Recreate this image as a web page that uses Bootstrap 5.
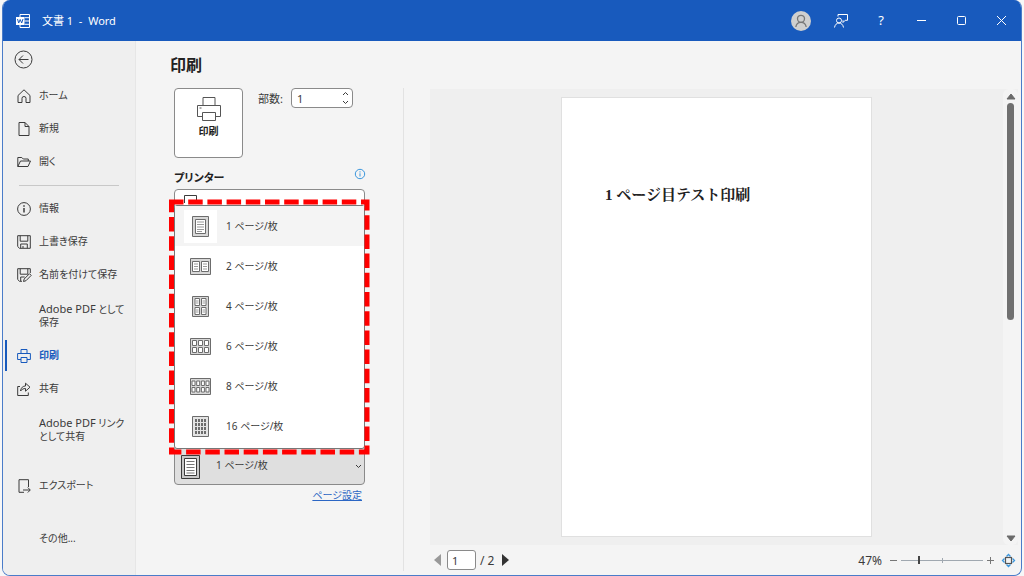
<!DOCTYPE html>
<html lang="ja">
<head>
<meta charset="utf-8">
<meta name="viewport" content="width=device-width, initial-scale=1">
<title>文書 1 - Word</title>
<link href="https://cdn.jsdelivr.net/npm/bootstrap@5.3.0/dist/css/bootstrap.min.css" rel="stylesheet">
<style>
:root { --word-blue: #185abd; --line: #8a8a8a; --ink: #3b3b3b; }
body { font-family: "Noto Sans", "Noto Sans CJK JP", sans-serif; font-size: 11px; line-height: 13px; color: var(--ink); font-feature-settings: "palt"; background: #f7f7f7; padding: 0 2px; }
svg { display: block; fill: none; stroke: currentColor; overflow: visible; }
button, input, select { font: inherit; color: inherit; font-feature-settings: inherit; }
.app-window { border: 1px solid #4a7cc9; border-top: 0; border-radius: 8px; background: #f4f4f4; overflow: hidden; }
.title-bar { background: var(--word-blue); color: #fff; height: 41px; padding-left: 13px; }
.title-bar button { width: 40px; height: 40px; color: #fff; font-size: 13px; }
.doc-name { white-space: pre; }
.bare { background: none; border: 0; padding: 0; }
.side { width: 133px; background: #efefef; border-right: 1px solid #e6e6e6; font-size: 10px; }
.side a { color: var(--ink); text-decoration: none; min-height: 33px; padding-left: 14px; gap: 8px; }
.side a.two-line { min-height: 48px; }
.side a svg, .side .blank { width: 14px; height: 14px; flex: none; }
.side .latin { font-size: 11px; }
.side .back { height: 36px; margin-bottom: 2px; padding-left: 11px; }
.side hr { margin: 7px 16px 6px 16px; border-top: 1px solid #c8c8c8; opacity: 1; }
.side a.current { color: var(--word-blue); font-weight: 700; position: relative; }
.side a.current::before { content: ""; position: absolute; left: 2px; top: 1px; bottom: 1px; width: 2px; background: var(--word-blue); }
.side .apart { margin-top: 20px; }
.pane-title { font-size: 16px; line-height: 20px; font-weight: 700; padding: 14px 0 13px 34px; margin: 0; color: #222; }
.settings { width: 268px; padding-left: 38px; padding-right: 38px; border-right: 1px solid #e2e2e2; }
.print-btn { width: 69px; height: 70px; border: 1px solid var(--line); border-radius: 4px; background: #fff; font-size: 10px; font-weight: 700; color: #222; padding-bottom: 12px; }
.print-btn svg { color: #555; }
.copies { width: 62px; height: 20px; border: 1px solid var(--line); border-radius: 4px; background: #fff; margin-right: 12px; }
.copies input { width: 40px; border: 0; background: none; padding: 0 0 0 5px; appearance: textfield; }
.copies input::-webkit-inner-spin-button { appearance: none; }
.copies button { width: 13px; height: 9px; }
.field-head { height: 31px; font-size: 11px; font-weight: 700; color: #222; }
.field-head svg { color: #3a96dd; }
.choices { height: 296px; font-size: 10px; }
.picker { position: relative; }
.picker select { width: 100%; height: 40px; border: 1px solid var(--line); border-radius: 4px; background: #fff; padding: 0 0 0 41px; appearance: none; }
.picker.pages select { background: #dfdfdf; }
.picker svg { position: absolute; pointer-events: none; }
.device-icon { left: 10px; top: 6px; }
.sheet-icon { left: 7px; top: 10px; }
.arrow-icon { right: 4px; top: 20px; }
.sheet-menu { position: absolute; top: 16px; left: 0; right: 0; border: 1px solid #777; border-radius: 3px; background: #fff; padding-bottom: 2px; }
.sheet-menu button { width: 100%; height: 40px; padding-left: 9px; gap: 9px; text-align: left; }
.sheet-menu button.selected { background: #f4f4f4; }
.sheet-menu .thumb { width: 33px; height: 33px; display: flex; align-items: center; justify-content: center; color: #6c6c6c; }
.sheet-menu .selected .thumb { background: #fff; }
.callout { position: absolute; left: -5px; top: 10px; width: 201px; height: 256px; color: #f00; pointer-events: none; }
.setup-link { color: #2b66c4; height: 21px; padding-right: 3px; font-size: 10px; }
.preview { padding-left: 26px; padding-right: 3px; }
.canvas-area { background: #efefef; margin-top: 1px; }
.paper { aspect-ratio: 311 / 440; background: #fff; border: 1px solid #e0e0e0; margin: 8px 0; padding: 88px 0 0 43px; font: 700 15px/18px "Liberation Serif", "Noto Serif CJK JP", "Noto Sans CJK JP", serif; color: #222; font-feature-settings: normal; }
.scroller { width: 15px; background: #f4f4f4; color: #6a6a6a; border-radius: 6px; padding: 5px 0 4px; }
.scroller .grip { width: 7px; height: 217px; background: #707070; border-radius: 4px; margin-top: 4px; }
.status { height: 30px; padding-left: 4px; padding-right: 3px; font-size: 12px; }
.status input[type=text] { width: 29px; height: 20px; border: 1px solid var(--line); border-radius: 3px; padding: 0 0 0 4px; margin: 0 4px 0 6px; background: #fff; font-size: 11px; }
.zoom { appearance: none; width: 82px; height: 10px; background: linear-gradient(#a0a8b0, #a0a8b0) center / 100% 1px no-repeat, linear-gradient(#a0a8b0, #a0a8b0) center / 1px 5px no-repeat; }
.zoom::-webkit-slider-thumb { appearance: none; width: 2px; height: 8px; background: #444; }
.scale-step { color: #777; }
</style>
<script src="https://cdn.jsdelivr.net/npm/bootstrap@5.3.0/dist/js/bootstrap.bundle.min.js"></script>
</head>
<body class="min-vh-100 d-flex flex-column">
<div class="app-window flex-grow-1 d-flex flex-column">
  <header class="title-bar d-flex align-items-center">
    <svg width="14" height="14" viewBox="0 0 14 14"><path d="M4 3V.5h9.500v13H4V11M8.500 3.700h5M8.500 7h5M8.500 10.300h5"/><rect x="0" y="3" width="8.500" height="8" fill="#fff" stroke="none"/><path d="M1.500 5l1.200 4L4.200 5.500 5.700 9 7 5" stroke="#185abd" stroke-width="1"/></svg>
    <span class="doc-name ms-2 ps-1 me-auto">文書 1  -  Word</span>
    <button class="bare d-flex align-items-center justify-content-center" aria-label="アカウント"><svg width="20" height="20" viewBox="0 0 20 20"><circle cx="10" cy="10" r="10" fill="#cfcfcf" stroke="none"/><g stroke="#777" stroke-width="1.300"><circle cx="10" cy="7.800" r="3.500"/><path d="M4.800 16c.5-3 2.500-4.700 5.200-4.700s4.700 1.700 5.200 4.700"/></g></svg></button>
    <button class="bare d-flex align-items-center justify-content-center" aria-label="フィードバック"><svg width="14" height="14" viewBox="0 0 14 14"><circle cx="5" cy="6.500" r="2.500"/><path d="M.5 13.500c.5-2.800 2.200-4.500 4.500-4.500s4 1.700 4.500 4.500M4 2.500V.5h9.500v5.800h-2.300L9 8.500V6.300"/></svg></button>
    <button class="bare" aria-label="ヘルプ">?</button>
    <button class="bare d-flex align-items-center justify-content-center" aria-label="最小化"><svg width="9" height="9" viewBox="0 0 9 9"><path d="M0 4.500h9"/></svg></button>
    <button class="bare d-flex align-items-center justify-content-center" aria-label="最大化"><svg width="9" height="9" viewBox="0 0 9 9"><rect x=".5" y=".5" width="8" height="8" rx="1"/></svg></button>
    <button class="bare d-flex align-items-center justify-content-center" aria-label="閉じる"><svg width="9" height="9" viewBox="0 0 9 9"><path d="M0 0l9 9M9 0L0 9"/></svg></button>
  </header>

  <div class="flex-grow-1 d-flex">
    <nav class="side flex-shrink-0 d-flex flex-column">
      <button class="bare back d-flex align-items-center" aria-label="戻る"><svg width="19" height="19" viewBox="0 0 19 19"><circle cx="9.500" cy="9.500" r="8.500"/><path d="M14.500 9.500H5M9 5.500l-4 4 4 4"/></svg></button>
      <a href="#" class="d-flex align-items-center"><svg viewBox="0 0 14 14"><path d="M1 6.500L7 .8l6 5.700v7H9V9.300Q9 7.500 7 7.500T5 9.300v4.200H1z"/></svg>ホーム</a>
      <a href="#" class="d-flex align-items-center"><svg viewBox="0 0 14 14"><path d="M2 .5h6l4 4v9H2zM8 .5v4h4"/></svg>新規</a>
      <a href="#" class="d-flex align-items-center"><svg viewBox="0 0 14 14"><path d="M.8 11.500v-9h4L6.300 4h5v2M.8 11.500L3.500 6h10L11 11.500z"/></svg>開く</a>
      <hr>
      <a href="#" class="d-flex align-items-center"><svg viewBox="0 0 14 14"><circle cx="7" cy="7" r="6.400"/><path d="M7 6v4.500M7 3.300v1.500" stroke-width="1.500"/></svg>情報</a>
      <a href="#" class="d-flex align-items-center"><svg viewBox="0 0 14 14"><path d="M.7.7h12.600v12.600H2.500L.7 11.500zM3.200.7v5.500h7.600V.7M3.700 13.300V9h6.600v4.300M6 11v2"/></svg>上書き保存</a>
      <a href="#" class="d-flex align-items-center"><svg viewBox="0 0 14 14"><path d="M13.300 5V.7H.7v10.800l1.800 1.800H5M3.200.7v5.500h7.600V.7M3.700 13V9h4M6.500 13.500l.7-2.500 5.300-5.300 1.700 1.700L9 12.700z"/></svg>名前を付けて保存</a>
      <a href="#" class="two-line d-flex align-items-center"><span class="blank"></span><span><span class="latin">Adobe PDF</span> として<br>保存</span></a>
      <a href="#" class="current d-flex align-items-center" aria-current="page"><svg viewBox="0 0 14 14"><path d="M4 4.500v-4h6v4M4 10.500H.6v-6h12.800v6H10M4 8.500h6v5H4z"/></svg>印刷</a>
      <a href="#" class="d-flex align-items-center"><svg viewBox="0 0 14 14"><path d="M3 4.500H.7v9h10.600v-3M3.500 9C4 5.500 6 4 8.500 4V1.200l4.500 4-4.500 4V6.500C6.500 6.500 5 7.200 3.500 9z"/></svg>共有</a>
      <a href="#" class="two-line d-flex align-items-center"><span class="blank"></span><span><span class="latin">Adobe PDF</span> リンク<br>として共有</span></a>
      <a href="#" class="d-flex align-items-center mt-3"><svg viewBox="0 0 14 14"><path d="M7 13.300H2V.7h9.500V8M6 11h7M10.800 8.500l2.500 2.500-2.500 2.500"/></svg>エクスポート</a>
      <a href="#" class="apart d-flex align-items-center mb-2"><span class="blank"></span>その他...</a>
    </nav>

    <main class="flex-grow-1 d-flex flex-column">
      <h1 class="pane-title">印刷</h1>
      <div class="flex-grow-1 d-flex">
        <form class="settings flex-shrink-0 mb-1">
          <div class="d-flex align-items-start">
            <button type="button" class="print-btn d-flex flex-column align-items-center justify-content-center gap-1"><svg width="24" height="24" viewBox="0 0 24 24"><path d="M6 8.500V.5h12v8M5.500 19.500h-5v-11h23v11h-5M5.500 15.500h13v8h-13zM2.500 11h2"/></svg>印刷</button>
            <label for="copies" class="ms-auto me-2 mt-1">部数:</label>
            <div class="copies d-flex align-items-center">
              <input id="copies" type="number" value="1" min="1">
              <div class="ms-auto">
                <button type="button" class="bare d-flex align-items-center justify-content-center" aria-label="増やす"><svg width="5" height="3" viewBox="0 0 5 3"><path d="M0 3l2.500-2.500L5 3"/></svg></button>
                <button type="button" class="bare d-flex align-items-center justify-content-center" aria-label="減らす"><svg width="5" height="3" viewBox="0 0 5 3"><path d="M0 0l2.500 2.500L5 0"/></svg></button>
              </div>
            </div>
          </div>
          <div class="field-head d-flex align-items-center justify-content-between">
            <label for="printer" class="pt-2">プリンター</label>
            <svg width="10" height="10" viewBox="0 0 10 10"><circle cx="5" cy="5" r="4.700"/><path d="M5 4.300v3.200M5 2.300v1.200"/></svg>
          </div>
          <div class="choices position-relative d-flex flex-column justify-content-between">
            <div class="picker">
              <select id="printer"><option>Microsoft Print to PDF</option></select>
              <svg class="device-icon" width="13" height="20" viewBox="0 0 13 20"><path d="M.5 8V.5h12V8"/></svg>
            </div>
            <div class="picker pages">
              <select aria-label="1 枚あたりのページ数"><option>1 ページ/枚</option></select>
              <svg class="sheet-icon" width="19" height="24" viewBox="0 0 19 24"><path d="M.5.500h18v23H.5z" fill="#c8c8c8"/><path d="M3.500 3.500h12v17h-12z" fill="#fff"/><path d="M5.500 6.500h8M5.500 9.500h8M5.500 12.500h8M5.500 15.500h8M5.500 18h8" stroke="#777"/></svg>
              <svg class="arrow-icon" width="5" height="3" viewBox="0 0 5 3"><path d="M0 0l2.500 2.500L5 0"/></svg>
            </div>
            <div class="sheet-menu">
              <button type="button" class="bare selected d-flex align-items-center"><span class="thumb"><svg width="17" height="21" viewBox="0 0 17 21"><path d="M.5.500h16v20H.5z" fill="#d8d8d8"/><path d="M3.500 3.500h10v14h-10z" fill="#fff"/><path d="M5 6h7M5 8.500h7M5 11h7M5 13.500h7M5 15.500h5" stroke="#999"/></svg></span>1 ページ/枚</button>
              <button type="button" class="bare d-flex align-items-center"><span class="thumb"><svg width="21" height="17" viewBox="0 0 21 17"><path d="M.5.500h20v16H.5z" fill="#d8d8d8"/><path d="M2.500 3.500h7v10h-7zM11.500 3.500h7v10h-7z" fill="#fff"/><path d="M4 6h4M4 8.500h4M4 11h4M13 6h4M13 8.500h4M13 11h4" stroke="#999"/></svg></span>2 ページ/枚</button>
              <button type="button" class="bare d-flex align-items-center"><span class="thumb"><svg width="17" height="21" viewBox="0 0 17 21"><path d="M.5.500h16v20H.5z" fill="#d8d8d8"/><path d="M3 2.500h4.500v7H3zM9.500 2.500H14v7H9.500zM3 11.500h4.500v7H3zM9.500 11.500H14v7H9.500z" fill="#fff"/><path d="M4 5h2.500M4 7h2.500M10.500 5H13M10.500 7H13M4 14h2.500M4 16h2.500M10.500 14H13M10.500 16H13" stroke="#999"/></svg></span>4 ページ/枚</button>
              <button type="button" class="bare d-flex align-items-center"><span class="thumb"><svg width="21" height="17" viewBox="0 0 21 17"><path d="M.5.500h20v16H.5z" fill="#d8d8d8"/><path d="M2.500 2.500h4v5h-4zM8.500 2.500h4v5h-4zM14.500 2.500h4v5h-4zM2.500 9.500h4v5h-4zM8.500 9.500h4v5h-4zM14.500 9.500h4v5h-4z" fill="#fff"/></svg></span>6 ページ/枚</button>
              <button type="button" class="bare d-flex align-items-center"><span class="thumb"><svg width="21" height="17" viewBox="0 0 21 17"><path d="M.5.500h20v16H.5z" fill="#d8d8d8"/><path d="M2 3h3v4.500H2zM6.700 3h3v4.500h-3zM11.400 3h3v4.500h-3zM16 3h3v4.500h-3zM2 9.500h3V14H2zM6.700 9.500h3V14h-3zM11.400 9.500h3V14h-3zM16 9.500h3V14h-3z" fill="#fff"/></svg></span>8 ページ/枚</button>
              <button type="button" class="bare d-flex align-items-center"><span class="thumb"><svg width="17" height="21" viewBox="0 0 17 21"><path d="M.5.500h16v20H.5z" fill="#e4e4e4"/><path d="M4 3v3M7 3v3M10 3v3M13 3v3M4 7v3M7 7v3M10 7v3M13 7v3M4 11v3M7 11v3M10 11v3M13 11v3M4 15v3M7 15v3M10 15v3M13 15v3" stroke-width="2"/></svg></span>16 ページ/枚</button>
            </div>
            <svg class="callout" viewBox="0 0 201 256"><path d="M0 3h198v250H2.500V3" stroke-width="5" stroke-dasharray="14.500 4.700"/></svg>
          </div>
          <div class="text-end"><a href="#" class="setup-link d-inline-flex align-items-center">ページ設定</a></div>
        </form>

        <section class="preview flex-grow-1 d-flex flex-column">
          <div class="canvas-area flex-grow-1 d-flex">
            <div class="flex-grow-1 d-flex justify-content-center"><article class="paper">1 ページ目テスト印刷</article></div>
            <div class="scroller d-flex flex-column align-items-center">
              <svg width="8" height="5" viewBox="0 0 8 5"><path d="M4 0l4 5H0z" fill="#6a6a6a"/></svg>
              <div class="grip"></div>
              <svg class="mt-auto" width="8" height="5" viewBox="0 0 8 5"><path d="M4 5l4-5H0z" fill="#6a6a6a"/></svg>
            </div>
          </div>
          <div class="status d-flex align-items-center">
            <button class="bare" aria-label="前のページ"><svg width="7" height="12" viewBox="0 0 7 12"><path d="M7 0v12L0 6z" fill="#999" stroke="none"/></svg></button>
            <input type="text" value="1" aria-label="ページ"><span>/ 2</span>
            <button class="bare ms-2" aria-label="次のページ"><svg width="7" height="12" viewBox="0 0 7 12"><path d="M0 0v12l7-6z" fill="#333" stroke="none"/></svg></button>
            <label for="zoom" class="ms-auto me-2">47%</label>
            <button class="bare scale-step" aria-label="縮小"><svg width="7" height="7" viewBox="0 0 7 7"><path d="M0 3.500h7"/></svg></button>
            <input id="zoom" class="zoom mx-1" type="range" min="0" max="100" value="21">
            <button class="bare scale-step" aria-label="拡大"><svg width="7" height="7" viewBox="0 0 7 7"><path d="M0 3.500h7M3.500 0v7"/></svg></button>
            <button class="bare ms-2" aria-label="ページに合わせる"><svg width="13" height="13" viewBox="0 0 13 13"><rect x="3.500" y="3.500" width="6" height="6" stroke="#555" stroke-width="1.200"/><path d="M4.500 2.500l2-2 2 2M4.500 10.500l2 2 2-2M2.500 4.500l-2 2 2 2M10.500 4.500l2 2-2 2" stroke="#3a96dd" stroke-width="1.300"/></svg></button>
          </div>
        </section>
      </div>
    </main>
  </div>
</div>
</body>
</html>
